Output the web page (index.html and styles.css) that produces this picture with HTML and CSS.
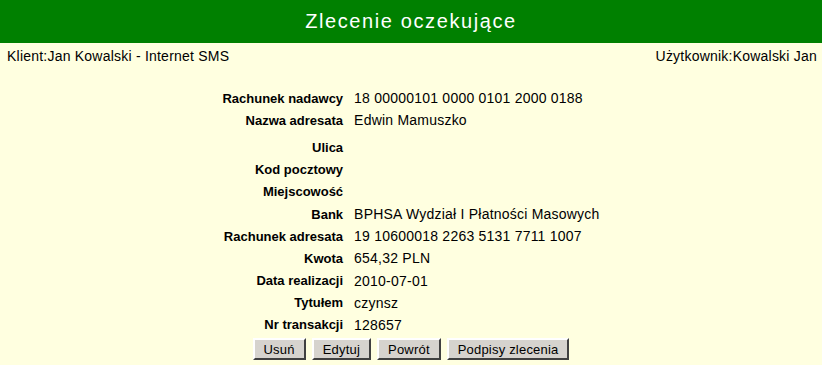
FILE: index.html
```html
<!DOCTYPE html>
<html lang="pl">
<head>
<meta charset="utf-8">
<title>Zlecenie oczekujące</title>
<link rel="stylesheet" href="styles.css">
</head>
<body>
<div class="header">Zlecenie oczekujące</div>
<div class="info">
  <span>Klient:Jan Kowalski - Internet SMS</span>
  <span>Użytkownik:Kowalski Jan</span>
</div>
<table class="details">
  <tr><th>Rachunek nadawcy</th><td>18 00000101 0000 0101 2000 0188</td></tr>
  <tr><th>Nazwa adresata</th><td>Edwin Mamuszko</td></tr>
  <tr class="gap"><th>Ulica</th><td></td></tr>
  <tr><th>Kod pocztowy</th><td></td></tr>
  <tr><th>Miejscowość</th><td></td></tr>
  <tr><th>Bank</th><td>BPHSA Wydział I Płatności Masowych</td></tr>
  <tr><th>Rachunek adresata</th><td>19 10600018 2263 5131 7711 1007</td></tr>
  <tr><th>Kwota</th><td>654,32 PLN</td></tr>
  <tr><th>Data realizacji</th><td>2010-07-01</td></tr>
  <tr><th>Tytułem</th><td>czynsz</td></tr>
  <tr><th>Nr transakcji</th><td>128657</td></tr>
</table>
<div class="buttons">
  <button class="btn">Usuń</button>
  <button class="btn">Edytuj</button>
  <button class="btn">Powrót</button>
  <button class="btn">Podpisy zlecenia</button>
</div>
</body>
</html>
```
FILE: styles.css
```css
html, body {
  margin: 0;
  padding: 0;
  background: #ffffe0;
  font-family: "Liberation Sans", Arial, sans-serif;
  font-size: 14px;
  letter-spacing: 0.22px;
  color: #000;
}
.header {
  background: #008000;
  color: #fff;
  height: 43px;
  line-height: 43px;
  text-align: center;
  font-size: 20px;
  letter-spacing: 1.6px;
}
.info {
  display: flex;
  justify-content: space-between;
  padding: 3px 5px 0 7px;
  height: 20px;
  line-height: 20px;
}
.details {
  margin: 21px auto 0;
  border-collapse: collapse;
}
.details th {
  text-align: right;
  font-weight: bold;
  font-size: 13px;
  letter-spacing: 0;
  padding: 0 11px 0 0;
  height: 22.2px;
  white-space: nowrap;
}
.details td {
  padding: 0;
  height: 22.2px;
  white-space: nowrap;
}
.details tr.gap th, .details tr.gap td {
  padding-top: 5px;
}
.buttons {
  display: flex;
  justify-content: center;
  gap: 6px;
  margin-top: 2px;
}
.btn {
  font-family: "Liberation Sans", Arial, sans-serif;
  font-size: 13px;
  letter-spacing: 0.2px;
  background: #d6d3ce;
  color: #000;
  height: 22px;
  padding: 0 9px;
  border: 2px solid;
  border-color: #fff #404040 #404040 #fff;
  border-radius: 0;
}
```
